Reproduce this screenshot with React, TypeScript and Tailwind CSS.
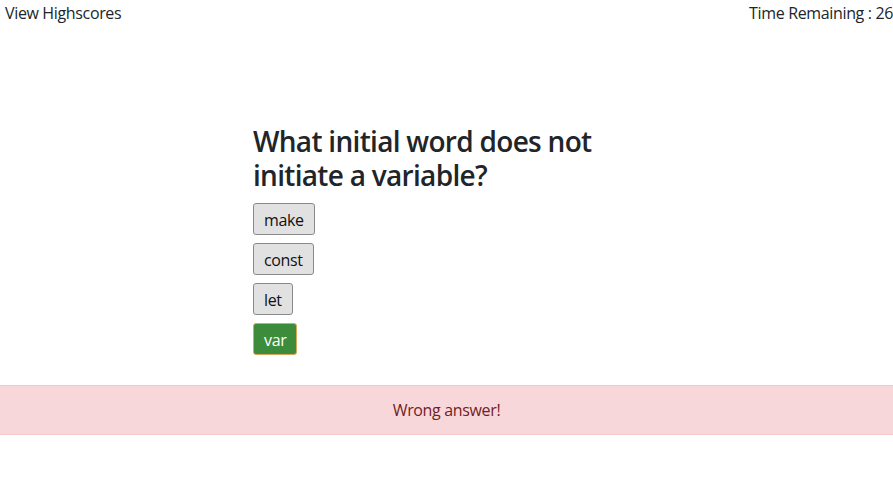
import React from 'react';

const answers = ['make', 'const', 'let', 'var'];

const App: React.FC = () => {
  const picked = 'var';

  return (
    <div className="min-h-[503px] bg-white text-[#212529] font-['Open_Sans','Noto_Sans',sans-serif] text-[16px] leading-[24px] tracking-[-0.35px]">
      <div className="flex justify-between pl-[5px] pt-[1px]">
        <a className="text-[#212529]">View Highscores</a>
        <span>Time Remaining : 26</span>
      </div>

      <div className="mx-auto mt-[100px] w-[387px]">
        <h3 className="text-[28px] leading-[33.6px] font-semibold tracking-[-0.7px] mb-[11px]">
          What initial word does not initiate a variable?
        </h3>
        <div className="flex flex-col items-start gap-[8px]">
          {answers.map((a) => (
            <button
              key={a}
              className={
                a === picked
                  ? 'px-[10px] pt-[4px] pb-[2px] rounded-[3px] border border-[#d9a85a] bg-[#3c8c3c] text-white'
                  : 'px-[10px] pt-[4px] pb-[2px] rounded-[3px] border border-[#8a8a8a] bg-[#e1e1e1] text-[#111]'
              }
            >
              {a}
            </button>
          ))}
        </div>
      </div>

      <div className="mt-[30px] border-y border-[#f5c6cb] bg-[#f8d7da] py-[12px] text-center text-[#721c24]">
        Wrong answer!
      </div>
    </div>
  );
};

export default App;
